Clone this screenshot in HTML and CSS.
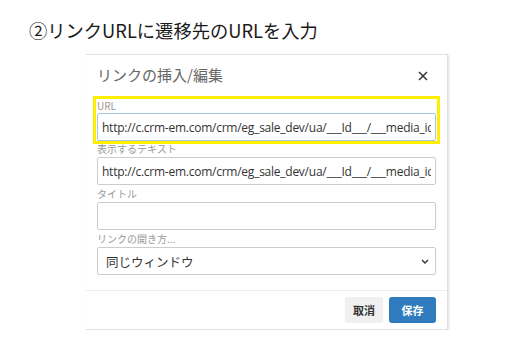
FILE: index.html
```html
<!DOCTYPE html>
<html lang="ja">
<head>
  <meta charset="UTF-8" />
  <meta name="viewport" content="width=device-width, initial-scale=1.0" />
  <title>リンクの挿入/編集</title>
  <link rel="stylesheet" href="styles.css">
</head>
<body>

<h1 class="step">②リンクURLに遷移先のURLを入力</h1>

<div class="dialog">
  <div class="dialog-head">
    <span class="dialog-title">リンクの挿入/編集</span>
    <svg class="close" width="10" height="10" viewBox="0 0 10 10">
      <path d="M1 1 L9 9 M9 1 L1 9" stroke="#333" stroke-width="1.5" fill="none" />
    </svg>
  </div>

  <div class="dialog-body">
    <div class="field highlight">
      <label class="field-label">URL</label>
      <input class="field-input" type="text" value="http://c.crm-em.com/crm/eg_sale_dev/ua/___Id___/___media_id___/">
    </div>
    <div class="field">
      <label class="field-label">表示するテキスト</label>
      <input class="field-input" type="text" value="http://c.crm-em.com/crm/eg_sale_dev/ua/___Id___/___media_id___/">
    </div>
    <div class="field">
      <label class="field-label">タイトル</label>
      <input class="field-input" type="text" value="">
    </div>
    <div class="field">
      <label class="field-label">リンクの開き方...</label>
      <div class="select">
        <span>同じウィンドウ</span>
        <svg width="8" height="5" viewBox="0 0 8 5">
          <path d="M1 1 L4 4 L7 1" stroke="#333" stroke-width="1.4" fill="none" />
        </svg>
      </div>
    </div>
  </div>

  <div class="dialog-foot">
    <button class="btn btn-cancel">取消</button>
    <button class="btn btn-save">保存</button>
  </div>
</div>

</body>
</html>
```

FILE: styles.css
```css
body {
  margin: 0;
  background-color: #fff;
  font-family: "Noto Sans", "Noto Sans CJK JP", sans-serif;
  color: #222;
}
.step {
  margin: 0;
  padding: 18px 0 0 29px;
  height: 36px;
  font-size: 18.3px;
  font-weight: normal;
  line-height: 24px;
  color: #1a1a1a;
  font-family: "Noto Sans CJK JP", sans-serif;
}
.dialog {
  margin-left: 86px;
  width: 362px;
  box-sizing: border-box;
  border: 1px solid #e0e0e0;
  border-left: none;
  box-shadow: 1px 1px 2px rgba(0, 0, 0, 0.12);
  background-color: #fff;
}
.dialog-head {
  display: flex;
  align-items: center;
  justify-content: space-between;
  height: 41px;
  padding: 0 19px 0 11px;
}
.dialog-title {
  font-family: "Noto Sans CJK JP", sans-serif;
  font-size: 15px;
  color: #666;
  padding-bottom: 2px;
}
.close {display: block;}
.dialog-body {
  padding: 0 11px 15px 7px;
}
.field {
  padding-left: 4px;
}
.field-label {
  display: block;
  font-family: "Noto Sans CJK JP", sans-serif;
  font-size: 10px;
  line-height: 17px;
  color: #9a9a9a;
}
.highlight {
  border: 3px solid #ffee00;
  padding: 0 0 0 1px;
  margin: 0 -4px -4px 0;
}
.highlight .field-label {line-height: 14px;}
.field-input {
  display: block;
  width: 100%;
  height: 28px;
  box-sizing: border-box;
  border: 1px solid #ccc;
  border-radius: 2px;
  padding: 0 4px;
  font-family: "Open Sans", sans-serif;
  font-size: 12px;
  letter-spacing: -0.25px;
  color: #333;
  background-color: #fff;
}
.highlight .field-input {
  width: 339px;
  border-color: #a6c5e0;
}
.select {
  display: flex;
  align-items: center;
  justify-content: space-between;
  height: 28px;
  box-sizing: border-box;
  border: 1px solid #ccc;
  border-radius: 2px;
  padding: 0 6px 0 8px;
  font-family: "Noto Sans CJK JP", sans-serif;
  font-size: 12.5px;
  color: #333;
}
.dialog-foot {
  display: flex;
  justify-content: flex-end;
  gap: 6px;
  padding: 6px 11px 6px 0;
  border-top: 1px solid #ececec;
}
.btn {
  height: 26px;
  border: none;
  border-radius: 3px;
  font-family: "Noto Sans CJK JP", sans-serif;
  font-size: 11px;
  font-weight: bold;
  cursor: pointer;
}
.btn-cancel {
  width: 38px;
  background-color: #f0f0f0;
  color: #333;
}
.btn-save {
  width: 47px;
  background-color: #2f7bbd;
  color: #fff;
}
```
